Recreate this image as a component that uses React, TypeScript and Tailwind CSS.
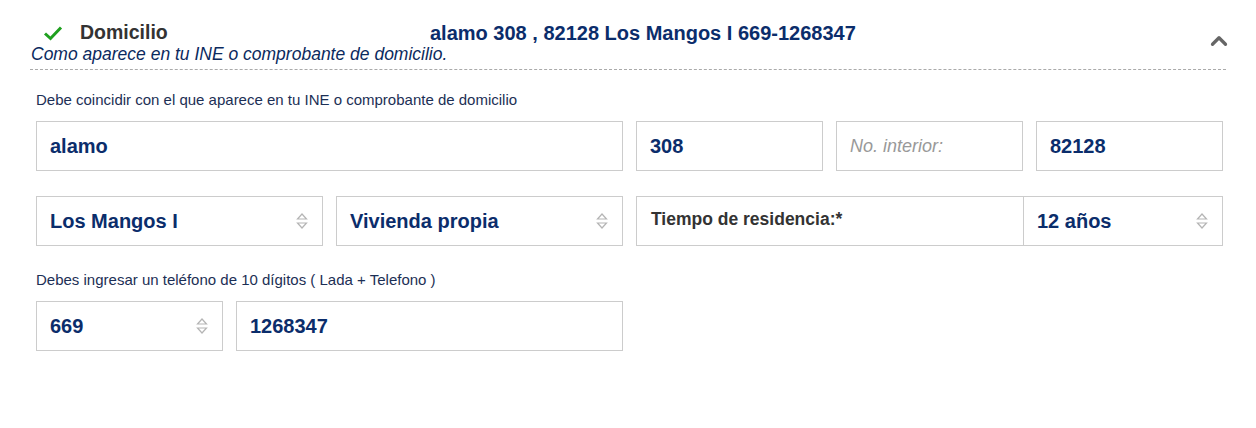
import { ChevronUp } from "lucide-react"

const navy = "text-[#0b2d6b]"

function Spinner() {
  return (
    <svg width="14" height="20" viewBox="0 0 14 20" fill="none" stroke="#b5b5b5" strokeWidth="1.2">
      <path d="M2.5 8 L7 3 L11.5 8 Z" />
      <path d="M2.5 12 L7 17 L11.5 12 Z" />
    </svg>
  )
}

function Field({ value, placeholder, select, className = "" }: { value?: string; placeholder?: string; select?: boolean; className?: string }) {
  return (
    <div className={`h-[50px] border border-[#cccccc] bg-white flex items-center justify-between pl-[13px] pr-[13px] ${className}`}>
      {value ? (
        <span className={`text-[20px] font-bold ${navy}`}>{value}</span>
      ) : (
        <span className="text-[18px] italic text-[#999999]">{placeholder}</span>
      )}
      {select && <Spinner />}
    </div>
  )
}

export default function App() {
  return (
    <div className="w-[1256px] h-[428px] bg-white" style={{ fontFamily: '"Liberation Sans", Arial, sans-serif' }}>
      <div className="px-[30px] pt-[21px]">
        <div className="flex items-start">
          <div className="flex-1">
            <div className="flex items-center h-[23px]">
              <svg width="20" height="16" viewBox="0 0 20 16" className="ml-[13px]">
                <path d="M2 8.5 L7.5 13.5 L18 2.5" stroke="#1fa01f" strokeWidth="3" fill="none" />
              </svg>
              <span className="ml-[17px] w-[350px] text-[19.5px] font-bold text-[#333333]">Domicilio</span>
              <span className={`text-[20px] font-bold ${navy}`}>alamo 308 , 82128 Los Mangos I 669-1268347</span>
            </div>
            <p className="ml-[1px] text-[17.5px] italic text-[#0b2a5e] leading-[20px]">Como aparece en tu INE o comprobante de domicilio.</p>
          </div>
          <ChevronUp size={26} strokeWidth={3} className="mt-[7px] mr-[-6px] text-[#666666]" />
        </div>
        <div className="mt-[5px] border-t border-dashed border-[#aaaaaa]" />
      </div>

      <div className="pl-[36px] pr-[33px] pt-[21px]">
        <p className="text-[15px] text-[#1c2f55] leading-[17px] mb-[13px]">Debe coincidir con el que aparece en tu INE o comprobante de domicilio</p>
        <div className="grid grid-cols-12 gap-x-[13px] gap-y-[25px]">
          <Field value="alamo" className="col-span-6" />
          <Field value="308" className="col-span-2" />
          <Field placeholder="No. interior:" className="col-span-2" />
          <Field value="82128" className="col-span-2" />

          <Field value="Los Mangos I" select className="col-span-3" />
          <Field value="Vivienda propia" select className="col-span-3" />
          <div className="col-span-6 h-[50px] border border-[#cccccc] flex">
            <div className="w-[387px] flex items-center pl-[14px] pb-[4px] border-r border-[#cccccc]">
              <span className="text-[17.5px] font-bold text-[#333333]">Tiempo de residencia:*</span>
            </div>
            <div className="flex-1 flex items-center justify-between pl-[13px] pr-[13px]">
              <span className={`text-[20px] font-bold ${navy}`}>12 años</span>
              <Spinner />
            </div>
          </div>
        </div>
        <p className="mt-[25px] text-[15px] text-[#1c2f55] leading-[17px] mb-[13px]">Debes ingresar un teléfono de 10 dígitos ( Lada + Telefono )</p>
        <div className="grid grid-cols-12 gap-x-[13px]">
          <Field value="669" select className="col-span-2" />
          <Field value="1268347" className="col-span-4" />
        </div>
      </div>
    </div>
  )
}
